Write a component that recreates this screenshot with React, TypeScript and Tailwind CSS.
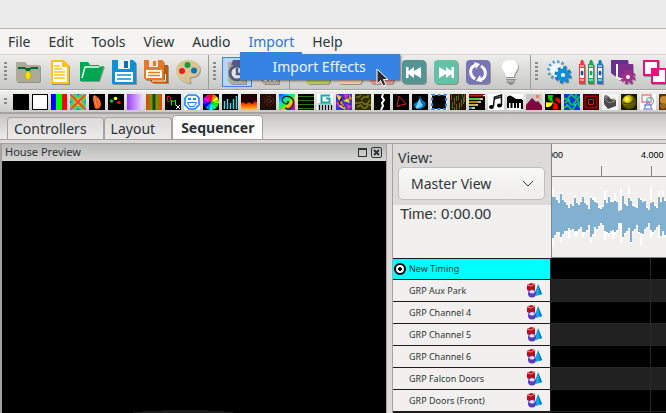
import type { ReactNode } from 'react'

// ---------- main toolbar icons, drawn on a 24 x 24 grid ----------

const Icon = ({ children }: { children: ReactNode }) => (
  <svg viewBox="0 0 24 24" className="size-6 drop-shadow-[1px_1px_0px_rgba(0,0,0,0.3)]" aria-hidden="true">{children}</svg>
)

const FolderIcon = () => (
  <Icon>
    <path d="M0 3a1 1 0 0 1 1-1h8l2 3h12a1 1 0 0 1 1 1v14a2 2 0 0 1-2 2H2a2 2 0 0 1-2-2z" fill="#adab98" />
    <path d="M2 7h7l1 1h4l1-1h7v2h-7l-1 2h-4L9 9H2z" fill="#00673f" />
    <path d="M12 11c2 1 2.500 3 2.500 5-.5 2-1.500 3-2.500 4-1-1-2-2-2.500-4 0-2 .5-4 2.500-5z" fill="#f7e600" stroke="#d5b600" />
  </Icon>
)

const NewIcon = () => (
  <Icon>
    <path d="M4 1h11l5 5v17H4z" fill="#fff" stroke="#ffc20e" strokeWidth="2" />
    <path d="M14 0v7h7z" fill="#ffc20e" />
    <path d="M6 6h6M6 9h8M6 12h11M6 15h11M6 18h11" stroke="#ffc20e" strokeWidth="1.600" />
  </Icon>
)

const OpenIcon = () => (
  <Icon>
    <path d="M0 2h8l2 3h9v3H6L2 21H0z" fill="#00a651" />
    <path d="M5 7h14l5-1-5 15H1z" fill="#00a651" />
    <path d="M2 18 5 7h14" fill="none" stroke="#e9fff2" strokeWidth="1.500" />
  </Icon>
)

const SaveIcon = () => (
  <Icon>
    <path d="M0 0h21l3 3v21H0z" fill="#0f8fd5" />
    <path d="M6 0h12v9H6z" fill="#e8f4fb" />
    <path d="M12 1h4v7h-4z" fill="#0f6fb0" />
    <path d="M3 12h18v10H3z" fill="#fff" />
    <path d="M5 15h14M5 19h14" stroke="#0f8fd5" strokeWidth="1.500" />
  </Icon>
)

const SaveAllIcon = () => (
  <Icon>
    <path d="M6 5h18v18H9l-3-2z" fill="#b85a10" />
    <path d="M0 0h18l2 2v18H2l-2-2z" fill="#e07b28" />
    <path d="M5 0h9v7H5z" fill="#f6e6da" />
    <path d="M9 1h3v5H9z" fill="#e07b28" />
    <path d="M2 10h16v8H2z" fill="#fff" />
    <path d="M4 12.500h12M4 15.500h12" stroke="#e07b28" strokeWidth="1.400" />
    <path d="M21.500 14v7H8" fill="none" stroke="#fff" />
  </Icon>
)

const PaletteIcon = () => (
  <Icon>
    <path d="M12 0c7 0 12 4 12 9 0 4-3 8-7 8-3 0-4 1-3 3s0 4-2 3C5 21 0 17 0 10 0 4 6 0 12 0z" fill="#dcc48f" />
    <circle cx="11.500" cy="5" r="3" fill="#159947" />
    <circle cx="6" cy="11" r="3" fill="#ed1c24" />
    <circle cx="18" cy="10.500" r="3" fill="#0f75bc" />
  </Icon>
)

const PasteTimeIcon = () => (
  <Icon>
    <path d="M3 2h18v22H6l-3-3z" fill="#b0ad98" />
    <path d="M8 0h8l2 5H6z" fill="#4f5b82" />
    <circle cx="12" cy="13" r="7" fill="#e4e4e4" stroke="#4f5b82" strokeWidth="3" />
    <path d="M12 8v6h5" stroke="#4f5b82" strokeWidth="2.500" fill="none" />
  </Icon>
)

const PasteCellIcon = () => (
  <Icon>
    <path d="M3 2h18v22H6l-3-3z" fill="#b0ad98" />
    <path d="M6 7h12v14H6z" fill="#fff" />
    <path d="M6 15h12M6 18h12M10 8v13M14 8v13" stroke="#6f7690" strokeWidth="1.500" />
  </Icon>
)

const TileIcon = ({ fill, children }: { fill: string; children: ReactNode }) => (
  <Icon>
    <rect width="24" height="24" rx="4" fill={fill} />
    {children}
  </Icon>
)

const BulbIcon = () => (
  <Icon>
    <path d="M12 0c5 0 8 3 8 7 0 4-4 5-4 10H8C8 12 4 11 4 7c0-4 3-7 8-7z" fill="#fff" />
    <path d="M8 17h8v4l-3 3h-2l-3-3z" fill="#8d8d8d" />
    <path d="M7 18.500h10M7 21h9" stroke="#d6d6d6" />
  </Icon>
)

const GearsIcon = () => (
  <Icon>
    <circle cx="10" cy="10" r="8" fill="none" stroke="#1a94d8" strokeWidth="4" strokeDasharray="1.200 3" />
    <circle cx="10" cy="10" r="7" fill="#f2f8fc" />
    <circle cx="16" cy="15" r="7" fill="none" stroke="#0f7fc5" strokeWidth="3" strokeDasharray="3 2.500" />
    <circle cx="16" cy="15" r="6.500" fill="#0f8fd5" />
    <circle cx="16" cy="15" r="2" fill="#fff" />
  </Icon>
)

const CrayonsIcon = () => (
  <Icon>
    {['#ee3b3b', '#20a455', '#1781bd'].map((color, i) => (
      <g key={color} transform={`translate(${i * 9})`}>
        <path d="M1 4 2 0h2l1 4h1v20H0V4z" fill={color} />
        <path d="M1 6h4M1 20h4" stroke="#fff" />
        <path d="M1 8h4v10H1z" fill="#fff" />
        <ellipse cx="3" cy="13" rx="1.500" ry="2.500" fill={i === 1 ? '#20a455' : '#1459a0'} />
      </g>
    ))}
  </Icon>
)

const RenderIcon = () => (
  <Icon>
    <path d="M0 0h17v16H4l-4-3z" fill="#66318f" />
    <path d="M5 4h16v16H8l-3-2z" fill="#fff" />
    <path d="M7 4h15v14H10l-3-1z" fill="#7d2f90" />
    <circle cx="17" cy="17" r="6" fill="none" stroke="#a52d8c" strokeWidth="3" strokeDasharray="2.700 2" />
    <circle cx="17" cy="17" r="3.500" fill="#fff" stroke="#a52d8c" strokeWidth="3" />
  </Icon>
)

const OverlapIcon = () => (
  <Icon>
    <path d="M1 1h14v14H1z" fill="#fff" stroke="#ec107c" strokeWidth="2" />
    <path d="M9 9h14v14H9z" fill="#fff" stroke="#ec107c" strokeWidth="2" />
    <path d="M8 8h8v8H8z" fill="#ec107c" />
  </Icon>
)

const fileTools = [
  { name: 'Show Directory', icon: <FolderIcon /> },
  { name: 'New Sequence', icon: <NewIcon /> },
  { name: 'Open Sequence', icon: <OpenIcon /> },
  { name: 'Save', icon: <SaveIcon /> },
  { name: 'Save As', icon: <SaveAllIcon /> },
  { name: 'Render All', icon: <PaletteIcon /> },
]

const playTools = [
  { name: 'Play', icon: <TileIcon fill="#b9cb61"><path d="M8 5v14l10-7z" fill="#fff" /></TileIcon> },
  { name: 'Pause', icon: <TileIcon fill="#f5c9a8"><path d="M6 5h4v14H6zM14 5h4v14h-4z" fill="#fff" /></TileIcon> },
  { name: 'Stop', icon: <TileIcon fill="#ee8f8f"><path d="M6 6h12v12H6z" fill="#fff" /></TileIcon> },
  {
    name: 'First Frame',
    icon: (
      <TileIcon fill="#559494">
        <path d="M4 7h2.500v4L12 7v4l7-4v11l-7-4v4l-5.500-4v4H4z" fill="#fff" />
      </TileIcon>
    ),
  },
  {
    name: 'Last Frame',
    icon: (
      <TileIcon fill="#63c2a6">
        <path d="M20 7h-2.500v4L12 7v4L5 7v11l7-4v4l5.500-4v4H20z" fill="#fff" />
      </TileIcon>
    ),
  },
  {
    name: 'Replay',
    icon: (
      <TileIcon fill="#7875b7">
        <path d="M10 5c-7 2-7 10-1 14M14 20c7-2 7-10 1-14" fill="none" stroke="#fff" strokeWidth="3" />
        <path d="m8 2 6 2-4 5zM16 22l-6-1 4-6z" fill="#fff" />
      </TileIcon>
    ),
  },
  { name: 'Output to Lights', icon: <BulbIcon /> },
]

const viewTools = [
  { name: 'Settings', icon: <GearsIcon /> },
  { name: 'Colors', icon: <CrayonsIcon /> },
  { name: 'Layer Settings', icon: <RenderIcon /> },
  { name: 'Layer Blending', icon: <OverlapIcon /> },
]

// ---------- effect icons, drawn on a 16 x 16 grid ----------

const wheel = ['#f00', '#ff8000', '#ff0', '#80ff00', '#0f0', '#00ff90', '#0ff', '#0080ff', '#00f', '#9000ff', '#f0f', '#ff0080']

const effects: { name: string; bg?: string; art?: ReactNode }[] = [
  { name: 'Off' },
  { name: 'On', art: <path d="M1 1h14v14H1z" fill="#fff" /> },
  {
    name: 'Bars',
    art: <><path d="M0 0h5v16H0z" fill="#00f" /><path d="M5 0h6v16H5z" fill="#0f0" /><path d="M11 0h5v16h-5z" fill="red" /></>,
  },
  {
    name: 'Butterfly',
    bg: '#e8b81c',
    art: (
      <>
        <path d="M4 0q4 6 8 0M4 16q4-6 8 0M0 4q6 4 0 8M16 4q-6 4 0 8" stroke="#3fd66f" strokeWidth="3" fill="none" />
        <path d="m1 1 14 14M15 1 1 15" stroke="#f4452c" strokeWidth="2" fill="none" />
        <path d="M6 0h4L8 2zM6 16h4l-2-2zM0 6v4l2-2zM16 6v4l-2-2z" fill="#27f" />
        <path d="M0 0h2v2H0zM14 0h2v2h-2zM0 14h2v2H0zM14 14h2v2h-2z" fill="#a5e" />
      </>
    ),
  },
  {
    name: 'Candle',
    art: <><path d="M5 1c3 1 7 4 7 9 0 3-2 5-4 5s-3-2-3-5C4 7 3 4 5 1z" fill="#f25a1e" /><path d="M5 2c2 3 1 7 3 11M8 5l3 3M9 9l2 2" stroke="#ffa050" fill="none" /></>,
  },
  {
    name: 'Circles',
    art: <><circle cx="3.500" cy="7" r="1.800" fill="#0c3" /><circle cx="7.500" cy="4.500" r="1.800" fill="#ff0" /><circle cx="11" cy="8.500" r="1.800" fill="red" /></>,
  },
  { name: 'Color Wash', bg: 'url(#wash)' },
  { name: 'Curtain', bg: 'url(#curtain)' },
  {
    name: 'DMX',
    art: (
      <>
        <path d="M2.500 2.500h2l1 1v3l-1 1h-2z" stroke="red" fill="none" />
        <path d="M6.500 11.500V6l2 2 2-2v5.500" stroke="#0f0" fill="none" />
        <path d="m11 11 4 4m0-4-4 4" stroke="#fff" />
      </>
    ),
  },
  {
    name: 'Faces',
    bg: '#fff',
    art: <><path d="M4 1h8l3 3v7l-4 4H5l-4-4V4z" fill="none" stroke="#1283ff" strokeWidth="1.600" /><path d="M4 4h3v2H4zM9 4h3v2H9z" fill="#1283ff" /><path d="M3.500 8.500h9l-2 4h-5z" fill="#fff" stroke="#1283ff" /></>,
  },
  {
    name: 'Fan',
    art: wheel.map((c, i) => <path key={c} d="M8 8 6 .5Q8-.5 10 .5z" fill={c} transform={`rotate(${i * 30} 8 8)`} />),
  },
  { name: 'VU Meter', art: <path d="M2.500 15V7M5.500 15V5M8.500 15V9M11.500 15V5M14.500 15V2" stroke="#62ccdb" strokeWidth="1.500" /> },
  { name: 'Fire', bg: 'url(#fire)', art: <path d="M0 0h16v8l-2-1-3 3-3-2-3 2-3-2-2 1z" fill="#200" /> },
  {
    name: 'Fireworks',
    bg: '#1c0d08',
    art: <><circle cx="9" cy="7" r="4.500" fill="none" stroke="#93402a" strokeDasharray="1 1" /><circle cx="9" cy="7" r="2" fill="none" stroke="#b5673a" strokeDasharray="1 1" /><circle cx="9" cy="8" r="7" fill="none" stroke="#4f2416" strokeDasharray="1 2" /></>,
  },
  {
    name: 'Galaxy',
    bg: 'url(#galaxy)',
    art: <path d="M8 8q2-1 1 1t-4 0-1-5 7-1 3 8-8 3" fill="none" stroke="#103018" strokeWidth="1.500" />,
  },
  { name: 'Garlands', art: <path d="M0 2.500h16M0 6.500h16M0 10.500h16M0 14.500h16" stroke="#2f7010" strokeWidth="1.200" /> },
  {
    name: 'Glediator',
    bg: '#fff',
    art: <><path d="M13 1.500H4.500v7h8v-4H9" fill="none" stroke="#23a3a6" strokeWidth="2" /><path d="M1 10h14" stroke="#23a3a6" /><path d="M2.500 11v5M5.500 11v5M8.500 11v5M11.500 11v5M14.500 11v5" stroke="#000" strokeWidth="1.500" /></>,
  },
  {
    name: 'Kaleidoscope',
    bg: '#3636d9',
    art: <><path d="m0 0 6 3-3 4zM7 7l5-3 2 5zM2 12l5-2 3 6z" fill="#ffd400" /><path d="m8 0 5 1-4 4zM0 8l5 0-3 5zM10 10l6 2-4 4z" fill="#ef2bb5" /><path d="m13 0 3 5-3 1zM6 7l1 4-5-2z" fill="#f80" /><path d="M6 3 3 9l5 4" stroke="#111" fill="none" /></>,
  },
  {
    name: 'Life',
    bg: '#2d2c05',
    art: <path d="M1 3h3l2-2M6 6l3-3h4M0 9h4l3-1 2 2h3l3-4M2 13l4-2 2 3h3l2-3h3M13 1v3" stroke="#7a7411" strokeWidth="1.500" fill="none" />,
  },
  { name: 'Lightning', art: <path d="m9 0-1 3 2 3-2 3 1 3-2 4" stroke="#fff" strokeWidth="2" fill="none" /> },
  { name: 'Lines', art: <path d="M6 2 4 12l9-2zM4 12l3 0" stroke="#d91c1c" fill="none" /> },
  {
    name: 'Liquid',
    art: <><path d="M8 1q1 4 3 6 4 1 2 5-2 3-6 3t-5-3q-1-3 3-4 3-3 3-7z" fill="#0a6fb8" /><path d="M8 5q0 3 2 5t-3 4-2-4 3-5z" fill="#6fd4ff" /></>,
  },
  { name: 'Marquee', bg: '#fff', art: <><path d="M1 1h14v14H1z" fill="#000" stroke="#2d86e8" strokeWidth="2" strokeDasharray="3 2.600" /><path d="M2 2h12v12H2z" /></> },
  {
    name: 'Meteors',
    bg: '#211703',
    art: <><path d="M1.500 0v6M4.500 3v8M8.500 1v5M11.500 5v8M14.500 0v8M6.500 10v6" stroke="#8a4a10" /><path d="M2.500 8v7M6.500 2v5M9.500 9v6M13.500 3v7M4.500 13v3M12.500 0v3" stroke="#3b8012" /></>,
  },
  {
    name: 'Morph',
    art: <><path d="M0 1.500h14" stroke="red" strokeWidth="2" /><path d="M0 5h11" stroke="#3dcc4a" strokeWidth="2" /><path d="M0 8h9" stroke="#fa0" strokeWidth="1.500" /><path d="M0 11h7" stroke="#ffe97a" strokeWidth="1.500" /><path d="M0 14h3" stroke="#5ad" strokeWidth="1.500" /><path d="M14 1.500h2M11 5h3M9 8h3M7 11h2M3 14h3" stroke="#fff" strokeWidth="1.500" /></>,
  },
  {
    name: 'Music',
    bg: '#fff',
    art: <><path d="m5.500 12 1-9 7-2v10" stroke="#111" strokeWidth="1.500" fill="none" /><path d="m6 5 7-2" stroke="#111" strokeWidth="1.500" /><ellipse cx="3.500" cy="13" rx="2.500" ry="2" /><ellipse cx="11.500" cy="11.500" rx="2.500" ry="2" /></>,
  },
  { name: 'Piano', bg: '#fff', art: <><path d="M0 3q3-3 6 0l3 2h6v4H0z" /><path d="M1 5v9M4.500 9v5M8 9v5M11 9v5M15 6v9" stroke="#000" strokeWidth="2" /></> },
  { name: 'Pictures', bg: '#c9c9c9', art: <><path d="m0 11 6-7 4 4 2-1 4 5v4H0z" fill="#81063e" /><path d="M10 1h3v3h-3z" fill="#ff7b45" /></> },
  {
    name: 'Pinwheel',
    art: <><path d="M8 8Q2 7 3 1h5q-1 4 0 7z" fill="#0c0" /><path d="M8 8q1-6 7-5v5q-4-1-7 0z" fill="#120" /><path d="M8 8q6 1 5 7H8q1-4 0-7zM10 5q4-2 6 2l-2 3z" fill="red" /><path d="M8 8q-1 6-7 5V8q4 1 7 0z" fill="#ff0" /></>,
  },
  {
    name: 'Plasma',
    bg: '#0b35e0',
    art: <><path d="M0 4q3 3 5-1t5 0 6-1M1 9q3-4 5 0t5-1 4 2M0 14q4-4 6 0t5-2 5 2M12 0v3" stroke="#13bf55" strokeWidth="1.800" fill="none" /><path d="M4 6h2M10 11h2M2 11h2" stroke="#0ff" /></>,
  },
  { name: 'Ripple', bg: '#300', art: <><path d="M2.500 2.500h11v11h-11z" fill="#000" stroke="#900" strokeWidth="2" /><path d="M5.500 5.500h5v5h-5z" stroke="#e11" /></> },
  {
    name: 'Servo',
    bg: '#f4f4f4',
    art: <><path d="m2 4 4-2 3 3 5 1 0 6-8 3-4-5z" fill="#4b4b4b" /><path d="m3 5 4 4 6-2" stroke="#8c8c8c" fill="none" /><circle cx="4" cy="3" r="2" fill="#777" /><path d="M12 4v4" stroke="#c08a3c" /></>,
  },
  { name: 'Shape', bg: '#1b1a02', art: <><circle cx="8" cy="8" r="7" fill="url(#ball)" /><path d="M2 8q6 5 12-3" stroke="#4b4500" strokeWidth="1.500" fill="none" /></> },
  {
    name: 'Sketch',
    bg: '#fff',
    art: <><path d="M2 1h9v7H2z" fill="none" stroke="#f27a86" strokeWidth="1.400" /><circle cx="10" cy="7" r="3.500" fill="none" stroke="#6bbf97" strokeWidth="1.300" /><path d="m4 15 4-8 4 8zM4 11h8" fill="none" stroke="#8490d8" strokeWidth="1.300" /></>,
  },
  { name: 'Snowflakes', bg: '#5a3508', art: <><circle cx="5" cy="6" r="4" fill="#c98b2c" /><circle cx="4" cy="12" r="3" fill="#9a6520" /></> },
]

// gradients shared by the effect icons
const Gradients = () => (
  <svg className="absolute size-0" aria-hidden="true">
    <defs>
      <linearGradient id="wash"><stop stopColor="#9a3cf5" /><stop offset="1" stopColor="#ecdcfb" /></linearGradient>
      <linearGradient id="curtain">
        <stop stopColor="#f43a06" /><stop offset=".35" stopColor="#6b9c0c" /><stop offset=".5" stopColor="#0b2d02" />
        <stop offset=".65" stopColor="#6b9c0c" /><stop offset="1" stopColor="#f43a06" />
      </linearGradient>
      <linearGradient id="fire" x2="0" y2="1"><stop offset=".35" stopColor="#700" /><stop offset=".6" stopColor="#f30" /><stop offset="1" stopColor="#fc3" /></linearGradient>
      <linearGradient id="galaxy" x2="1" y2="1">
        <stop stopColor="#22f" /><stop offset=".3" stopColor="#0df" /><stop offset=".5" stopColor="#3e3" /><stop offset=".65" stopColor="#fc0" />
        <stop offset=".85" stopColor="#f0c" /><stop offset="1" stopColor="#90f" />
      </linearGradient>
      <radialGradient id="ball" cx=".35" cy=".3"><stop stopColor="#fffca0" /><stop offset=".4" stopColor="#e2d300" /><stop offset="1" stopColor="#5b5400" /></radialGradient>
    </defs>
  </svg>
)

// ---------- sequencer data ----------

const groups = ['GRP Aux Park', 'GRP Channel 4', 'GRP Channel 5', 'GRP Channel 6', 'GRP Falcon Doors', 'GRP Doors (Front)']

// blue top edge / bottom edge and the white peaks behind it, one entry per two pixels
const waveTop = [
  20, 20, 23, 26, 17, 23, 25, 28, 31, 27, 29, 21, 26, 28, 25, 20, 26, 28, 32, 21, 23, 25, 26, 31, 32, 30, 23, 26, 20, 25, 25, 24, 25, 34, 33, 19,
  27, 29, 21, 24, 29, 30, 31, 21, 23, 25, 24, 31, 33, 26, 25, 29, 31, 20, 25, 20, 24, 34,
]
const waveBottom = [
  61, 58, 55, 55, 60, 57, 54, 54, 51, 53, 52, 54, 54, 52, 50, 55, 55, 53, 48, 60, 57, 50, 52, 49, 46, 48, 54, 55, 56, 54, 53, 55, 53, 46, 46, 60,
  56, 54, 51, 65, 54, 52, 48, 55, 56, 57, 52, 50, 46, 53, 55, 53, 50, 48, 59, 54, 58, 50,
]
const peakTop = [
  11, 18, 21, 24, 15, 21, 23, 25, 24, 25, 27, 18, 24, 26, 23, 16, 24, 26, 30, 18, 21, 20, 24, 29, 29, 28, 14, 24, 19, 23, 23, 16, 23, 34, 12, 18,
  25, 27, 10, 22, 27, 28, 29, 20, 21, 23, 22, 29, 31, 10, 23, 27, 29, 14, 23, 14, 22, 33,
]
const peakBottom = [
  70, 60, 57, 57, 65, 58, 57, 56, 61, 55, 54, 59, 59, 54, 51, 60, 57, 55, 49, 66, 59, 60, 54, 50, 47, 49, 63, 57, 60, 56, 62, 58, 55, 48, 65, 62,
  58, 56, 53, 67, 56, 54, 50, 57, 68, 59, 54, 52, 47, 61, 57, 55, 52, 61, 60, 60, 60, 51,
]

const band = (top: number[], bottom: number[]) =>
  top.map((y, i) => `M${i * 2} ${y}h2V${bottom[i]}h-2z`).join('')

const Waveform = () => (
  <svg className="block h-20 w-full" shapeRendering="crispEdges" role="img" aria-label="Audio waveform">
    <path d={band(peakTop, peakBottom)} fill="#fff" />
    <path d={band(waveTop, waveBottom)} fill="#82b0d0" />
  </svg>
)

const GroupIcon = () => (
  <svg viewBox="0 0 15 15" className="size-[15px]" aria-hidden="true">
    <path d="m11 1 4 10-6 2-1-3z" fill="#12a5e3" />
    <path d="m11 1 4 10-2 1z" fill="#0877b8" />
    <path d="m0 2 4-2 4 1v6L4 9 0 7z" fill="#b80f1c" />
    <path d="m0 2 4 1 4-2" stroke="#f08a90" fill="none" />
    <circle cx="5" cy="10.500" r="4" fill="#5a3bb8" />
    <path d="M2 9q3-4 6 0-3 3-6 0z" fill="#e6dcff" />
  </svg>
)

// ---------- layout pieces ----------

const Grip = ({ short }: { short?: boolean }) => (
  <div className={`w-[3px] shrink-0 bg-[repeating-linear-gradient(#8b8b89_0_2px,transparent_2px_4px)] ${short ? 'h-2' : 'h-5'}`} />
)

const Tools = ({ items }: { items: { name: string; icon: ReactNode }[] }) => (
  <div className="ml-[5px] flex">
    {items.map((t) => (
      <button key={t.name} aria-label={t.name} className="flex size-8 items-center justify-center">{t.icon}</button>
    ))}
  </div>
)

const Divider = () => <div className="mr-1 h-full w-px shrink-0 bg-[#9c9c9a]" />

const MenuBar = () => (
  <nav className="flex h-[26px] shrink-0 gap-0.5 border-t border-[#b5b5b3] bg-[#f5f4f2] text-[14px] leading-[26px]">
    {['File', 'Edit', 'Tools', 'View', 'Audio'].map((m) => (
      <button key={m} className="px-2">{m}</button>
    ))}
    <div className="relative">
      <button className="h-full border-b-2 border-[#3584e4] px-2 text-[#2a76d2]" aria-expanded="true">Import</button>
      <div role="menu" className="absolute top-full left-0 z-10 w-40 bg-[#3584e4] shadow-[1px_1px_2px_rgba(0,0,0,0.5)]">
        <button role="menuitem" className="block w-full pl-8 text-left text-[#eef4fc]">Import Effects</button>
        {/* mouse pointer */}
        <svg viewBox="0 0 13 19" className="absolute top-3.5 left-[136px] h-[19px] w-[13px]" aria-hidden="true">
          <path d="M1 1v15l3.500-3.500L7 18l3-1-2.500-5.500H12z" fill="#2b2b2b" stroke="#fff" />
        </svg>
      </div>
    </div>
    <button className="px-2">Help</button>
  </nav>
)

const MainToolbar = () => (
  <div className="flex h-9 shrink-0 items-center overflow-hidden border-t border-b border-t-[#d6d5d3] border-b-[#a3a3a1] bg-linear-to-b from-[#ededec] to-[#c8c8c6] pl-1">
    <Grip />
    <Tools items={fileTools} />
    <div className="w-1 shrink-0" />
    <Divider />
    <Grip />
    <div className="flex pr-px pl-1.5">
      <button aria-label="Paste by Time" aria-pressed="true" className="flex size-[30px] items-center justify-center border border-[#3584e4] bg-[#b9d3f2]">
        <PasteTimeIcon />
      </button>
      <button aria-label="Paste by Cell" className="flex h-[30px] w-9 items-center justify-center"><PasteCellIcon /></button>
    </div>
    <Divider />
    <Grip />
    <Tools items={playTools} />
    <div className="w-1 shrink-0" />
    <Divider />
    <Grip />
    <Tools items={viewTools} />
  </div>
)

const EffectsToolbar = () => (
  <div className="flex h-[22px] shrink-0 items-center overflow-hidden border-t border-white bg-linear-to-b from-[#efefee] to-[#cbcbc9] pl-1">
    <Grip short />
    <div className="ml-1.5 flex gap-[3px]">
      {effects.map((e) => (
        <button key={e.name} aria-label={e.name} className="size-4 shrink-0">
          <svg viewBox="0 0 16 16" className="size-4">
            <path d="M0 0h16v16H0z" fill={e.bg ?? '#000'} />
            {e.art}
          </svg>
        </button>
      ))}
    </div>
  </div>
)

const Tabs = () => (
  <div role="tablist" className="flex h-7 shrink-0 items-end border-t-2 border-b border-t-[#a3a3a1] border-b-[#a3a3a1] bg-linear-to-b from-[#c6c5c4] to-[#edecea] pl-[7px] text-[14px]">
    {['Controllers', 'Layout'].map((t) => (
      <button key={t} role="tab" aria-selected="false" className="h-[22px] rounded-t-sm border border-b-0 border-[#a3a3a1] bg-linear-to-b from-[#dcdbd9] to-[#ecebe9] pr-4 pl-1.5 leading-5">
        {t}
      </button>
    ))}
    <button role="tab" aria-selected="true" className="h-6 rounded-t-sm border border-b-0 border-[#a3a3a1] bg-[#fdfdfd] px-2 font-bold">
      Sequencer
    </button>
  </div>
)

const HousePreview = () => (
  <section className="flex w-[387px] shrink-0 flex-col border-r border-l-2 border-[#a3a3a1] bg-black">
    <header className="flex h-[17px] items-center bg-linear-to-b from-[#b9b9b7] to-[#d6d6d4] pr-1 pl-[3px] text-[11px]">
      <h2 className="flex-1">House Preview</h2>
      <button aria-label="Maximize" className="mr-1 h-[9px] w-[9px] border border-t-2 border-[#2e3436]" />
      <button aria-label="Close" className="size-[11px] rounded-xs border border-[#2e3436]">
        <svg viewBox="0 0 9 9" className="size-[9px]"><path d="m2 2 5 5m0-5-5 5" stroke="#2e3436" strokeWidth="2" /></svg>
      </button>
    </header>
    <svg viewBox="0 0 384 3" className="mt-auto w-full" aria-hidden="true">
      <path d="M131 2h10V1h19V0h46v1h16v1h9v1H131z" fill="#1b1b1b" />
    </svg>
  </section>
)

const Sequencer = () => (
  <section className="flex min-w-0 flex-1 flex-col border-l border-[#a3a3a1] bg-[#f1f0ee]">
    <div className="flex h-[114px] shrink-0">
      <div className="w-[158px] shrink-0">
        <div className="h-[61px] bg-[#dcdbda] px-[5px] pt-1">
          <label htmlFor="view" className="block h-[19px] text-[14px] leading-5">View:</label>
          <div className="relative">
            <select id="view" className="h-[33px] w-[147px] appearance-none rounded-[5px] border border-[#c0bfbd] bg-linear-to-b from-[#f8f8f7] to-[#eeedec] pl-3 text-[14px]">
              <option>Master View</option>
            </select>
            <svg viewBox="0 0 12 6" className="pointer-events-none absolute top-3.5 right-3 h-1.5 w-3" aria-hidden="true">
              <path d="m1 0 5 5 5-5" stroke="#2e3436" fill="none" />
            </svg>
          </div>
        </div>
        <p className="pl-[7px] font-['Liberation_Sans',sans-serif] text-[15px] leading-[18px]">Time: 0:00.00</p>
      </div>
      <div className="min-w-0 flex-1 overflow-hidden border-b border-l border-[#848482]">
        {/* ruler, scrolled so that the first mark is half out of view */}
        <div className="relative h-[33px] border-b border-[#848482] font-['Liberation_Sans',sans-serif] text-[9px] leading-[14px] text-black">
          <span className="absolute top-1 -left-1">000</span>
          <span className="absolute top-1 left-[89px]">4.000</span>
          <i className="absolute bottom-0 left-[49px] h-2.5 w-px bg-[#848482]" />
          <i className="absolute bottom-0 left-[99px] h-2.5 w-px bg-[#848482]" />
        </div>
        <Waveform />
      </div>
    </div>
    <div className="flex flex-1 bg-black text-[9px]">
      <ul className="w-[158px] shrink-0 border-r border-b border-[#1c1c1c]">
        <li className="h-[22px] border-t border-b border-[#1c1c1c]">
          <label className="flex h-full items-center gap-[3px] bg-[#00ffff] pl-px">
            <input type="radio" defaultChecked className="size-3 appearance-none rounded-full border-2 border-black bg-[radial-gradient(#000_0_2px,#fff_2px)]" />
            New Timing
          </label>
        </li>
        {groups.map((g) => (
          <li key={g} className="flex h-[22px] items-center justify-between border-b border-[#1c1c1c] bg-[#f1f0ee] pr-2 pl-4">
            {g}
            <GroupIcon />
          </li>
        ))}
      </ul>
      <div className="min-w-0 flex-1">
        {['New Timing', ...groups].map((g) => (
          <div key={g} className="flex h-[22px] border-b border-[#262626] odd:bg-black even:bg-[#212121]">
            <div className="w-[100px] border-r border-[#2b2b2b]" />
          </div>
        ))}
      </div>
    </div>
  </section>
)

const App = () => {
  return (
    <div className="flex min-h-screen flex-col overflow-hidden bg-[#ebebeb] font-['Noto_Sans','Open_Sans',sans-serif] text-[#2e3436]">
      <Gradients />
      <div className="h-7 shrink-0" />
      <MenuBar />
      <MainToolbar />
      <EffectsToolbar />
      <Tabs />
      <div className="h-1 shrink-0 border-b border-[#a3a3a1] bg-[#dcdbda]" />
      <main className="flex flex-1">
        <HousePreview />
        <div className="w-[5px] shrink-0 bg-[#dcdbda]" />
        <Sequencer />
      </main>
    </div>
  )
}

export default App
